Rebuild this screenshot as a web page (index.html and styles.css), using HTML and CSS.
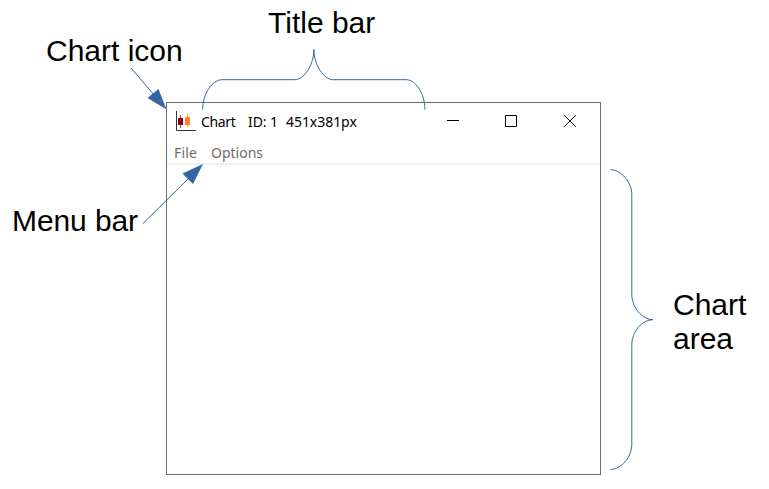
FILE: index.html
```
<!DOCTYPE html>
<html lang="en">
<head>
<meta charset="utf-8">
<title>Chart window</title>
<link rel="stylesheet" href="styles.css">
</head>
<body>
<main class="diagram">
  <section class="window">
    <header class="titlebar">
      <svg class="app-icon" width="20" height="20" viewBox="0 0 20 20">
        <path d="M.5 0V19.5H20" fill="none" stroke="#333"/>
        <path d="M4.5 4V17" stroke="#a84454"/>
        <path d="M2 7h5v7H2z" fill="#850014"/>
        <path d="M11.500 3V16" stroke="#ffa35c"/>
        <path d="M9 6h5v8H9z" fill="#ff7f27"/>
      </svg>
      <h1 class="title"><span class="t-name">Chart</span><span class="t-id">ID: 1</span><span class="t-size">451x381px</span></h1>
      <div class="controls">
        <svg width="12" height="12" viewBox="0 0 12 12"><path d="M0 5.5H12"/></svg>
        <svg width="12" height="12" viewBox="0 0 12 12"><path d="M.5.5h11v11H.5z"/></svg>
        <svg class="close" width="12" height="12" viewBox="0 0 12 12"><path d="M.2.2 11.8 11.8M11.8.2.2 11.8"/></svg>
      </div>
    </header>
    <nav class="menubar"><span class="m-file">File</span><span class="m-options">Options</span></nav>
    <div class="chart-area"></div>
  </section>
  <svg class="marks" width="769" height="489" viewBox="0 0 769 489">
    <path class="line" d="M131 68 155 96M143 223.500 190 177"/>
    <path class="head" d="M166.500 109.500 147.500 98 158.500 89zM203 164 182.500 173.500 193 184z"/>
    <path class="line" d="M202.700 109.500C202.700 94 212 79.700 222 79.700H295C304 79.700 313.900 65 313.900 49.500C313.900 65 324 79.700 333 79.700H406C416 79.700 424.900 94 424.900 109.500"/>
    <path class="line" d="M610.500 169.700C621 169.700 631.800 182 631.800 194.500V294.500C631.800 307 642 319.700 653 319.700C642 319.700 631.800 332 631.800 344.500V444.500C631.800 457 621 469.500 610.500 469.500"/>
  </svg>
  <p class="label icon-label">Chart icon</p>
  <p class="label title-label">Title bar</p>
  <p class="label menu-label">Menu bar</p>
  <p class="label area-label">Chart<br>area</p>
</main>
</body>
</html>
```
FILE: styles.css
```
* { box-sizing: border-box; }
body { margin: 0; background: #fff; }
.diagram {
  position: relative;
  width: 769px;
  height: 489px;
  padding: 102px 168px 14px 166px;
  overflow: hidden;
}
.window {
  display: flex;
  flex-direction: column;
  height: 373px;
  border: 1px solid #6c6c6e;
  font-family: "Noto Sans", "Open Sans", sans-serif;
}
.titlebar {
  display: flex;
  align-items: center;
  height: 37px;
  padding: 0 24px 0 9px;
}
.app-icon { margin-top: -1px; }
.title {
  display: flex;
  margin: 1px 0 0 5px;
  font-size: 14px;
  font-weight: 400;
  line-height: 20px;
  white-space: pre;
  color: #000;
}
.t-name { width: 47px; letter-spacing: -0.35px; }
.t-id { width: 38px; letter-spacing: -0.1px; }
.t-size { letter-spacing: -0.05px; }
.controls {
  display: flex;
  gap: 46px;
  margin: -1px 0 0 auto;
}
.controls svg { fill: none; stroke: #000; stroke-width: 1; }
.controls .close { margin-left: 1px; }
.menubar {
  display: flex;
  height: 25px;
  padding-left: 7px;
  border-bottom: 2px solid #f0f0f0;
  font-size: 14px;
  line-height: 26px;
  color: #6d6d6d;
}
.m-file { width: 37px; letter-spacing: 0.2px; }
.chart-area { flex: 1; }
.marks { position: absolute; inset: 0; }
.line { fill: none; stroke: #3465a4; stroke-width: 1; }
.head { fill: #3465a4; }
.label {
  position: absolute;
  margin: 0;
  font: 30px/34px "Liberation Sans", Arial, sans-serif;
  color: #000;
  white-space: nowrap;
}
.icon-label { left: 46px; top: 34px; }
.title-label { left: 268px; top: 6px; }
.menu-label { left: 12px; top: 204px; letter-spacing: -0.1px; }
.area-label { left: 673px; top: 288px; }
```
